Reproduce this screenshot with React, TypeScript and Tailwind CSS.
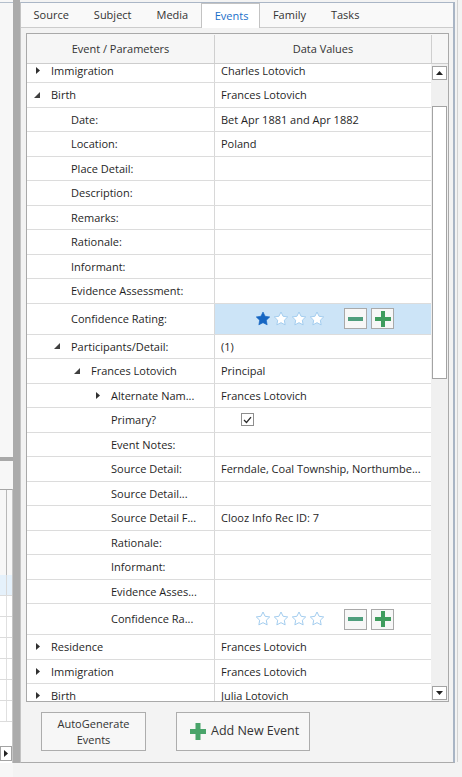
import React from 'react';

type Row = {
  label: string;
  level: 0 | 1 | 2 | 3;
  arrow?: 'r' | 'd';
  value?: string;
  kind?: 'rating' | 'check';
  rating?: number;
  hl?: boolean;
};

const rows: Row[] = [
  { label: 'Immigration', level: 0, arrow: 'r', value: 'Charles Lotovich' },
  { label: 'Birth', level: 0, arrow: 'd', value: 'Frances Lotovich' },
  { label: 'Date:', level: 1, value: 'Bet Apr 1881 and Apr 1882' },
  { label: 'Location:', level: 1, value: 'Poland' },
  { label: 'Place Detail:', level: 1 },
  { label: 'Description:', level: 1 },
  { label: 'Remarks:', level: 1 },
  { label: 'Rationale:', level: 1 },
  { label: 'Informant:', level: 1 },
  { label: 'Evidence Assessment:', level: 1 },
  { label: 'Confidence Rating:', level: 1, kind: 'rating', rating: 1, hl: true },
  { label: 'Participants/Detail:', level: 1, arrow: 'd', value: '(1)' },
  { label: 'Frances Lotovich', level: 2, arrow: 'd', value: 'Principal' },
  { label: 'Alternate Nam...', level: 3, arrow: 'r', value: 'Frances Lotovich' },
  { label: 'Primary?', level: 3, kind: 'check' },
  { label: 'Event Notes:', level: 3 },
  { label: 'Source Detail:', level: 3, value: 'Ferndale, Coal Township, Northumbe...' },
  { label: 'Source Detail...', level: 3 },
  { label: 'Source Detail F...', level: 3, value: 'Clooz Info Rec ID: 7' },
  { label: 'Rationale:', level: 3 },
  { label: 'Informant:', level: 3 },
  { label: 'Evidence Asses...', level: 3 },
  { label: 'Confidence Ra...', level: 3, kind: 'rating', rating: 0 },
  { label: 'Residence', level: 0, arrow: 'r', value: 'Frances Lotovich' },
  { label: 'Immigration', level: 0, arrow: 'r', value: 'Frances Lotovich' },
  { label: 'Birth', level: 0, arrow: 'r', value: 'Julia Lotovich' },
];

const levelPad: Record<number, string> = {
  0: 'pl-[6px]',
  1: 'pl-[26px]',
  2: 'pl-[46px]',
  3: 'pl-[66px]',
};

const STAR = 'M12 1.5l3.1 6.4 7 1-5.1 4.9 1.2 7L12 17.5l-6.2 3.3 1.2-7-5.1-4.9 7-1z';

function Star({ filled }: { filled: boolean }) {
  return (
    <svg width="16" height="16" viewBox="0 0 24 24">
      {filled ? (
        <path d={STAR} fill="#1766c2" stroke="#1766c2" strokeWidth="1" strokeLinejoin="round" />
      ) : (
        <path d={STAR} fill="#ffffff" stroke="#a3cdef" strokeWidth="1.5" strokeLinejoin="round" />
      )}
    </svg>
  );
}

function Rating({ value }: { value: number }) {
  return (
    <div className="flex items-center pl-[40px]">
      <div className="flex items-center gap-[2px]">
        {[0, 1, 2, 3].map((i) => (
          <Star key={i} filled={i < value} />
        ))}
      </div>
      <div className="ml-[19px] w-[23px] h-[21px] border border-[#a9a9a9] bg-[#f7f7f7] flex items-center justify-center">
        <div className="w-[15px] h-[4px] bg-[#4f9e7d]" />
      </div>
      <div className="ml-[4px] w-[23px] h-[21px] border border-[#a9a9a9] bg-[#f7f7f7] flex items-center justify-center">
        <svg width="16" height="16" viewBox="0 0 16 16">
          <rect x="0" y="6" width="16" height="4" fill="#3f9c5e" />
          <rect x="6" y="0" width="4" height="16" fill="#3f9c5e" />
        </svg>
      </div>
    </div>
  );
}

function Arrow({ dir }: { dir: 'r' | 'd' }) {
  if (dir === 'r') {
    return (
      <svg width="4" height="7" viewBox="0 0 4 7" className="ml-[3px]">
        <path d="M0 0L4 3.5L0 7Z" fill="#303030" />
      </svg>
    );
  }
  return (
    <svg width="6" height="6" viewBox="0 0 6 6" className="ml-[1px]">
      <path d="M6 0V6H0Z" fill="#404040" />
    </svg>
  );
}

function GridRow({ r }: { r: Row }) {
  const tall = r.kind === 'rating';
  return (
    <div className={`flex border-b border-[#dcdcdc] ${tall ? 'h-[31px]' : 'h-[24.5px]'}`}>
      <div className={`w-[188px] shrink-0 border-r border-[#d8d8d8] flex items-center ${levelPad[r.level]}`}>
        <div className="w-[18px] shrink-0 flex items-center">{r.arrow ? <Arrow dir={r.arrow} /> : null}</div>
        <span className="whitespace-nowrap pt-[1px]">{r.label}</span>
      </div>
      <div className={`flex-1 flex items-center min-w-0 ${r.hl ? 'bg-[#cce4f7]' : ''}`}>
        {r.kind === 'rating' ? (
          <Rating value={r.rating ?? 0} />
        ) : r.kind === 'check' ? (
          <div className="pl-[26px]">
            <div className="w-[13px] h-[13px] border border-[#8e8e8e] bg-white flex items-center justify-center">
              <svg width="9" height="8" viewBox="0 0 9 8">
                <path d="M1 4L3.5 6.5L8 1.2" fill="none" stroke="#2a2a2a" strokeWidth="1.3" />
              </svg>
            </div>
          </div>
        ) : (
          <span className="pl-[6px] pt-[1px] whitespace-nowrap overflow-hidden">{r.value ?? ''}</span>
        )}
      </div>
    </div>
  );
}

function ScrollBtn({ up }: { up: boolean }) {
  return (
    <div className="w-[15px] h-[14px] border border-[#a3a3a3] bg-white flex items-center justify-center">
      <svg width="7" height="4" viewBox="0 0 7 4">
        {up ? <path d="M0 4L3.5 0L7 4Z" fill="#222" /> : <path d="M0 0L3.5 4L7 0Z" fill="#222" />}
      </svg>
    </div>
  );
}

function LeftStrip() {
  const lowRows = [0, 1, 2, 3, 4, 5];
  return (
    <div className="w-[13px] shrink-0 flex flex-col bg-[#f7f7f7]">
      <div className="h-[2px]" />
      <div className="h-[1px] bg-[#b4bfcc]" />
      <div className="h-[454px]" />
      <div className="h-[4px] bg-[#a9a9a9]" />
      <div className="h-[28px]" />
      <div className="h-[274px] border-t border-[#a6a6a6] border-r border-r-[#c6c6c6] flex flex-col">
        <div className="h-[85px] flex">
          <div className="w-[7px] border-r border-[#b8b8b8]" />
        </div>
        <div className="h-[21px] bg-[#e5f1fb] border-b border-[#dcdcdc] flex">
          <div className="w-[7px] border-r border-[#d8d8d8]" />
        </div>
        {lowRows.map((i) => (
          <div key={i} className="h-[21px] bg-white border-b border-[#dcdcdc] flex">
            <div className="w-[7px] border-r border-[#e0e0e0]" />
          </div>
        ))}
        <div className="flex-1 bg-white flex flex-col justify-end pb-[2px]">
          <div className="w-[12px] h-[15px] border border-[#a3a3a3] bg-white flex items-center justify-center">
            <svg width="4" height="7" viewBox="0 0 4 7">
              <path d="M0 0L4 3.5L0 7Z" fill="#222" />
            </svg>
          </div>
        </div>
      </div>
    </div>
  );
}

export default function App() {
  const tabs = ['Source', 'Subject', 'Media', 'Events', 'Family', 'Tasks'];
  return (
    <div className="w-[462px] h-[777px] bg-[#f3f3f3] flex overflow-hidden font-['Open_Sans',sans-serif] text-[11px] text-[#1f1f1f]">
      <LeftStrip />
      <div className="w-[7px] h-[763px] shrink-0 bg-[#ababab]" />
      <div className="w-[435px] shrink-0 mt-[2px] h-[761px] border-t border-t-[#aab6c6] border-r-2 border-r-[#a9b5c5] border-l border-l-[#c3c3c3] border-b border-b-[#ababab] flex flex-col">
        <div className="h-[25px] flex bg-[#f9f9f9]">
          {tabs.map((t) =>
            t === 'Events' ? (
              <div key={t} className="h-full flex items-center pt-[1px] pl-[13px] pr-[11px] bg-white border border-b-0 border-[#c3c3c3] text-[#1a6fc9]">
                {t}
              </div>
            ) : (
              <div key={t} className="h-full flex items-center pt-[1px] px-[12.5px] border-b border-[#cccccc] text-[#333]">
                {t}
              </div>
            )
          )}
          <div className="flex-1 border-b border-[#cccccc]" />
        </div>
        <div className="flex-1 bg-[#f3f3f3] flex flex-col">
          <div className="mt-[5px] ml-[5px] w-[423px] h-[669px] border border-[#a9a9a9] bg-white flex flex-col">
            <div className="h-[30px] flex bg-[#f6f6f6] border-b border-[#cdcdcd] text-[#333] pt-[1px]">
              <div className="w-[188px] border-r border-[#cfcfcf] flex items-center justify-center">Event / Parameters</div>
              <div className="w-[217px] border-r border-[#cfcfcf] flex items-center justify-center">Data Values</div>
              <div className="flex-1" />
            </div>
            <div className="flex-1 flex min-h-0">
              <div className="w-[404px] overflow-hidden">
                <div className="-mt-[5.5px]">
                  {rows.map((r, i) => (
                    <GridRow key={i} r={r} />
                  ))}
                </div>
              </div>
              <div className="flex-1 bg-[#f0f0f0] flex flex-col items-center pt-[2px] pb-[1px]">
                <ScrollBtn up />
                <div className="mt-[26px] w-[15px] h-[273px] border border-[#a3a3a3] bg-white" />
                <div className="flex-1" />
                <ScrollBtn up={false} />
              </div>
            </div>
          </div>
          <div className="mt-[10px] ml-[20px] flex gap-[30px]">
            <div className="w-[105px] h-[39px] border border-[#adadad] bg-[#f7f7f7] flex flex-col items-center justify-center leading-[16px] text-[#333]">
              <span>AutoGenerate</span>
              <span>Events</span>
            </div>
            <div className="w-[134px] h-[39px] border border-[#adadad] bg-[#f7f7f7] flex items-center pl-[13px] gap-[5px] text-[12.5px] text-[#333]">
              <svg width="16" height="17" viewBox="0 0 16 17">
                <rect x="0" y="6" width="16" height="5" fill="#49a46a" />
                <rect x="5.5" y="0" width="5" height="17" fill="#49a46a" />
              </svg>
              <span>Add New Event</span>
            </div>
          </div>
        </div>
      </div>
      <div className="w-[7px] shrink-0 flex">
        <div className="ml-[2px] h-[762px] border-l border-[#d2d2d2]" />
      </div>
    </div>
  );
}
